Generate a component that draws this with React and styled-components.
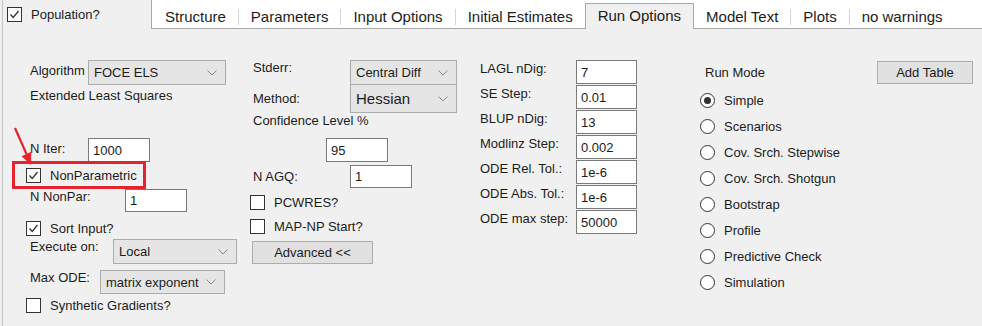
import React from 'react';
import styled, { createGlobalStyle } from 'styled-components';

const tabs = [
	{ label: 'Structure' },
	{ label: 'Parameters' },
	{ label: 'Input Options' },
	{ label: 'Initial Estimates' },
	{ label: 'Run Options', active: true },
	{ label: 'Model Text' },
	{ label: 'Plots' },
	{ label: 'no warnings' },
];

const numeric = [
	{ label: 'LAGL nDig:', value: '7' },
	{ label: 'SE Step:', value: '0.01' },
	{ label: 'BLUP nDig:', value: '13' },
	{ label: 'Modlinz Step:', value: '0.002' },
	{ label: 'ODE Rel. Tol.:', value: '1e-6' },
	{ label: 'ODE Abs. Tol.:', value: '1e-6' },
	{ label: 'ODE max step:', value: '50000' },
];

const modes = [
	'Simple',
	'Scenarios',
	'Cov. Srch. Stepwise',
	'Cov. Srch. Shotgun',
	'Bootstrap',
	'Profile',
	'Predictive Check',
	'Simulation',
];

function Chevron() {
	return (
		<svg width="10" height="6" viewBox="0 0 10 6">
			<polyline points="0.5,0.5 5,5 9.5,0.5" fill="none" stroke="#8a8a8a" strokeWidth="1" />
		</svg>
	);
}

function Dropdown({ value, w, h, fs }) {
	return (
		<Select $w={w} $h={h} $fs={fs}>
			<span>{value}</span>
			<Chevron />
		</Select>
	);
}

function Check({ checked, children }) {
	return (
		<CheckRow>
			<Box>
				{checked && (
					<svg width="13" height="13" viewBox="0 0 13 13">
						<polyline points="2.5,6.5 5.2,9.5 10.5,3" fill="none" stroke="#333" strokeWidth="1.3" />
					</svg>
				)}
			</Box>
			<span>{children}</span>
		</CheckRow>
	);
}

export default function App() {
	return (
		<>
			<GlobalStyle />
			<Frame>
				<Header>
					<PopArea>
						<Check checked>Population?</Check>
					</PopArea>
					<TabStrip>
						{tabs.map((t, i) => {
							const prev = tabs[i - 1];
							const sep = i > 0 && !t.active && !prev.active;
							return (
								<React.Fragment key={t.label}>
									{sep && <TabSep />}
									<Tab $active={t.active}>{t.label}</Tab>
								</React.Fragment>
							);
						})}
					</TabStrip>
				</Header>

				<Body>
					<Column $w={247} $pl={23}>
						<Row $mt={31} $h={25} $indent>
							<Label $w={58} $pt={3}>Algorithm</Label>
							<Dropdown value="FOCE ELS" w={138} h={25} />
						</Row>
						<Caption>Extended Least Squares</Caption>
						<Row $mt={33} $h={24} $indent>
							<Label $w={58} $pt={3}>N Iter:</Label>
							<TextBox $w={62} $h={24}>1000</TextBox>
						</Row>
						<Highlight>
							<Check checked>NonParametric</Check>
						</Highlight>
						<Row $h={23} $indent>
							<Label $w={95} $pt={0}>N NonPar:</Label>
							<TextBox $w={62} $h={23}>1</TextBox>
						</Row>
						<Row $mt={9} $h={16}>
							<Check checked>Sort Input?</Check>
						</Row>
						<Row $mt={2} $h={25} $indent>
							<Label $w={83} $pt={0}>Execute on:</Label>
							<Dropdown value="Local" w={124} h={25} />
						</Row>
						<Row $mt={6} $h={24} $indent>
							<Label $w={70} $pt={0}>Max ODE:</Label>
							<Dropdown value="matrix exponent" w={125} h={24} />
						</Row>
						<Row $mt={4} $h={16}>
							<Check>Synthetic Gradients?</Check>
						</Row>
					</Column>

					<Column $w={226}>
						<Row $mt={31} $h={25}>
							<Label $w={100} $pt={0} $pl={3}>Stderr:</Label>
							<Dropdown value="Central Diff" w={107} h={25} />
						</Row>
						<Row $mt={-1} $h={29} $center>
							<Label $w={100} $pl={3}>Method:</Label>
							<Dropdown value="Hessian" w={107} h={29} fs={15} />
						</Row>
						<Caption $pl={3} $h={15}>Confidence Level %</Caption>
						<Row $mt={10} $h={24}>
							<TextBox $w={62} $h={24} $ml={76}>95</TextBox>
						</Row>
						<Row $mt={3} $h={23} $center>
							<Label $w={100} $pl={3}>N AGQ:</Label>
							<TextBox $w={62} $h={23}>1</TextBox>
						</Row>
						<Row $mt={7} $h={15}>
							<Check>PCWRES?</Check>
						</Row>
						<Row $mt={9} $h={15}>
							<Check>MAP-NP Start?</Check>
						</Row>
						<Row $mt={7} $h={23}>
							<Button $w={121} $h={23} $ml={2}>Advanced &lt;&lt;</Button>
						</Row>
					</Column>

					<Column $w={222} $pl={4}>
						<Spacer $h={31} />
						{numeric.map((n) => (
							<Row key={n.label} $h={24} $mb={1}>
								<Label $w={96} $pt={1}>{n.label}</Label>
								<TextBox $w={61} $h={24}>{n.value}</TextBox>
							</Row>
						))}
					</Column>

					<Column $w={284}>
						<Row $mt={32} $h={23} $center>
							<Label $pl={7}>Run Mode</Label>
							<Button $w={96} $h={23} $ml="auto" $mr={9}>Add Table</Button>
						</Row>
						<Radios>
							{modes.map((m, i) => (
								<RadioRow key={m}>
									<Radio $on={i === 0} />
									<span>{m}</span>
								</RadioRow>
							))}
						</Radios>
					</Column>
				</Body>

				<Arrow width="60" height="180" viewBox="0 0 60 180">
					<line x1="15" y1="128" x2="26.5" y2="154" stroke="#e5232e" strokeWidth="2.2" />
					<polygon points="31,165 21.6,156.2 31.3,151.8" fill="#e5232e" />
				</Arrow>
			</Frame>
		</>
	);
}

const GlobalStyle = createGlobalStyle`
	body {
		margin: 0;
		background: #f0f0f0;
	}
`;

const Frame = styled.div`
	position: relative;
	width: 982px;
	height: 326px;
	box-sizing: border-box;
	padding-left: 2px;
	background: #f0f0f0;
	font-family: 'Liberation Sans', Arial, sans-serif;
	font-size: 13px;
	line-height: 15px;
	color: #1c1c1c;
	overflow: hidden;

	& > * {
		border-left: 1px solid #c4c4c4;
	}
`;

const Header = styled.div`
	display: flex;
	height: 29px;
`;

const PopArea = styled.div`
	width: 148px;
	padding: 7px 0 0 4px;
	box-sizing: border-box;
`;

const TabStrip = styled.div`
	flex: 1;
	display: flex;
	align-items: flex-end;
	height: 28px;
	padding-left: 1px;
	background: #fff;
	border-left: 1px solid #a8a8a8;
	border-bottom: 1px solid #a8a8a8;
	font-size: 15px;
	line-height: 17px;
`;

const Tab = styled.div`
	display: flex;
	align-items: center;
	box-sizing: border-box;
	height: ${(p) => (p.$active ? '26px' : '23px')};
	padding: ${(p) => (p.$active ? '0 12px 2px' : '0 12px')};
	margin-bottom: ${(p) => (p.$active ? '-1px' : '0')};
	background: ${(p) => (p.$active ? '#f0f0f0' : 'transparent')};
	border: ${(p) => (p.$active ? '1px solid #a8a8a8' : 'none')};
	border-bottom: none;
	white-space: nowrap;
`;

const TabSep = styled.div`
	width: 1px;
	height: 16px;
	margin-bottom: 3px;
	background: #d6d6d6;
`;

const Body = styled.div`
	display: flex;
	height: 297px;
`;

const Column = styled.div`
	display: flex;
	flex-direction: column;
	width: ${(p) => p.$w}px;
	padding-left: ${(p) => p.$pl || 0}px;
	box-sizing: border-box;
	flex-shrink: 0;
`;

const Spacer = styled.div`
	height: ${(p) => p.$h}px;
	flex-shrink: 0;
`;

const Row = styled.div`
	display: flex;
	align-items: ${(p) => (p.$center ? 'center' : 'flex-start')};
	height: ${(p) => p.$h}px;
	margin-top: ${(p) => p.$mt || 0}px;
	margin-bottom: ${(p) => p.$mb || 0}px;
	padding-left: ${(p) => (p.$indent ? 4 : 0)}px;
	flex-shrink: 0;
`;

const Label = styled.div`
	width: ${(p) => (p.$w ? `${p.$w}px` : 'auto')};
	padding-top: ${(p) => p.$pt || 0}px;
	padding-left: ${(p) => p.$pl || 0}px;
	box-sizing: border-box;
	white-space: nowrap;
	flex-shrink: 0;
`;

const Caption = styled.div`
	display: flex;
	align-items: center;
	height: ${(p) => p.$h || 20}px;
	padding-left: ${(p) => (p.$pl != null ? p.$pl : 4)}px;
`;

const Select = styled.div`
	display: flex;
	align-items: center;
	justify-content: space-between;
	width: ${(p) => p.$w}px;
	height: ${(p) => p.$h}px;
	box-sizing: border-box;
	padding: 0 8px 0 5px;
	background: #e5e5e5;
	border: 1px solid #acacac;
	font-size: ${(p) => p.$fs || 13}px;
	white-space: nowrap;
	flex-shrink: 0;
`;

const TextBox = styled.div`
	display: flex;
	align-items: center;
	width: ${(p) => p.$w}px;
	height: ${(p) => p.$h}px;
	margin-left: ${(p) => p.$ml || 0}px;
	box-sizing: border-box;
	padding-left: 4px;
	background: #fff;
	border: 1px solid #7a7a7a;
	flex-shrink: 0;
`;

const CheckRow = styled.div`
	display: flex;
	align-items: center;
	gap: 9px;
	white-space: nowrap;
`;

const Box = styled.div`
	width: 15px;
	height: 15px;
	box-sizing: border-box;
	border: 1px solid #333;
	background: #fff;
	display: flex;
	align-items: center;
	justify-content: center;
	flex-shrink: 0;
`;

const Highlight = styled.div`
	display: flex;
	align-items: center;
	width: 134px;
	height: 28px;
	margin: -1px 0 0 -14px;
	padding-left: 11px;
	box-sizing: border-box;
	border: 3px solid #e5232e;
	flex-shrink: 0;
`;

const Button = styled.div`
	display: flex;
	align-items: center;
	justify-content: center;
	width: ${(p) => p.$w}px;
	height: ${(p) => p.$h}px;
	margin-left: ${(p) => (p.$ml === 'auto' ? 'auto' : `${p.$ml || 0}px`)};
	margin-right: ${(p) => p.$mr || 0}px;
	box-sizing: border-box;
	background: #e1e1e1;
	border: 1px solid #adadad;
	white-space: nowrap;
`;

const Radios = styled.div`
	display: flex;
	flex-direction: column;
	gap: 10px;
	margin-top: 8px;
	padding-left: 2px;
`;

const RadioRow = styled.div`
	display: flex;
	align-items: center;
	gap: 9px;
	height: 16px;
	white-space: nowrap;
`;

const Radio = styled.div`
	position: relative;
	width: 15px;
	height: 15px;
	box-sizing: border-box;
	border: 1px solid #333;
	border-radius: 50%;
	background: #fff;
	flex-shrink: 0;

	&::after {
		content: '';
		display: ${(p) => (p.$on ? 'block' : 'none')};
		position: absolute;
		left: 3px;
		top: 3px;
		width: 7px;
		height: 7px;
		border-radius: 50%;
		background: #333;
	}
`;

const Arrow = styled.svg`
	position: absolute;
	left: 0;
	top: 0;
	border: none !important;
	pointer-events: none;
`;
